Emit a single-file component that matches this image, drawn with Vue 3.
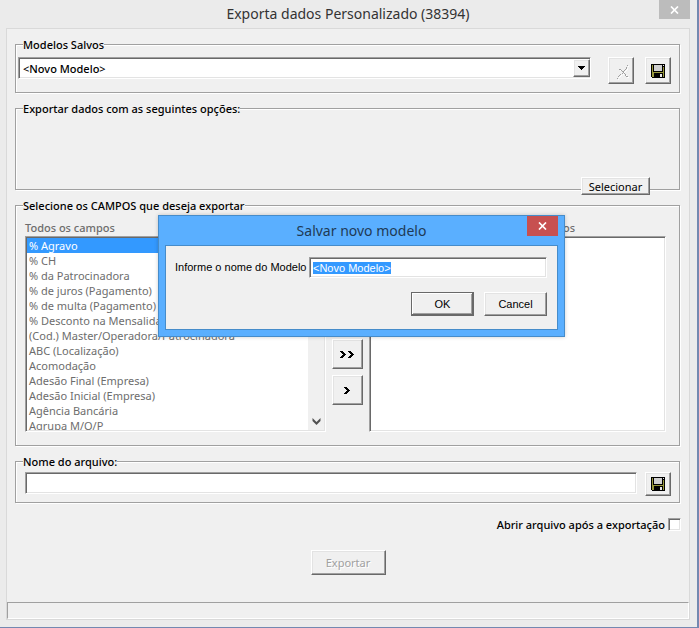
<template>
  <main class="window">
    <header class="title-bar">
      <h1 class="window-title">Exporta dados Personalizado (38394)</h1>
      <button class="close-button" type="button" aria-label="Fechar">
        <svg width="9" height="8" viewBox="0 0 9 8">
          <path d="M1 0.5 L8 7.5 M8 0.5 L1 7.5" stroke="#fff" stroke-width="1.7" />
        </svg>
      </button>
    </header>

    <div class="client">
      <fieldset class="group">
        <legend>Modelos Salvos</legend>
        <div class="row models-row">
          <div class="combo sunken">
            <select v-model="model" aria-label="Modelos Salvos">
              <option>&lt;Novo Modelo&gt;</option>
            </select>
            <span class="combo-arrow raised">
              <svg width="7" height="4" viewBox="0 0 7 4" shape-rendering="crispEdges">
                <path d="M0 0h7v1h-1v1h-1v1h-1v1h-1v-1h-1v-1h-1v-1h-1z" fill="#000" />
              </svg>
            </span>
          </div>
          <button class="icon-button delete-button raised" type="button" aria-label="Excluir modelo" disabled>
            <svg width="12" height="15" viewBox="0 0 12 15" shape-rendering="crispEdges">
              <path :d="crossPath" fill="#fff" transform="translate(1 1)" />
              <path :d="crossPath" fill="#a0a0a0" />
            </svg>
          </button>
          <button class="icon-button raised" type="button" aria-label="Salvar modelo">
            <svg width="14" height="14" viewBox="0 0 14 14" shape-rendering="crispEdges">
              <path v-for="part in diskParts" :key="part.d" :d="part.d" :fill="part.fill" />
            </svg>
          </button>
        </div>
      </fieldset>

      <fieldset class="group">
        <legend>Exportar dados com as seguintes opções:</legend>
        <div class="row options-row">
          <button class="select-button raised" type="button">Selecionar</button>
        </div>
      </fieldset>

      <fieldset class="group">
        <legend>Selecione os CAMPOS que deseja exportar</legend>
        <div class="row fields-row">
          <div class="column all-fields">
            <label for="all-fields">Todos os campos</label>
            <div class="list-box sunken">
              <select id="all-fields" v-model="selectedField" size="13" disabled>
                <option v-for="field in fields" :key="field" :value="field">{{ field }}</option>
              </select>
              <span class="scrollbar">
                <svg width="9" height="7" viewBox="0 0 9 7">
                  <path d="M0.5 0 L4.5 4 L8.5 0 V3 L4.5 7 L0.5 3 Z" fill="#505050" />
                </svg>
              </span>
            </div>
          </div>
          <div class="move-buttons">
            <button class="raised" type="button" aria-label="Adicionar todos">
              <svg width="15" height="7" viewBox="0 0 15 7" shape-rendering="crispEdges">
                <path :d="chevronPath" />
                <path :d="chevronPath" transform="translate(8 0)" />
              </svg>
            </button>
            <button class="raised" type="button" aria-label="Adicionar">
              <svg width="7" height="7" viewBox="0 0 7 7" shape-rendering="crispEdges">
                <path :d="chevronPath" />
              </svg>
            </button>
          </div>
          <div class="column chosen-fields">
            <label for="chosen-fields">Campos selecionados</label>
            <div class="list-box sunken">
              <select id="chosen-fields" size="13" disabled></select>
            </div>
          </div>
        </div>
      </fieldset>

      <fieldset class="group">
        <legend>Nome do arquivo:</legend>
        <div class="row file-row">
          <input v-model="fileName" class="text-box sunken" type="text" aria-label="Nome do arquivo" />
          <button class="icon-button raised" type="button" aria-label="Escolher arquivo">
            <svg width="14" height="14" viewBox="0 0 14 14" shape-rendering="crispEdges">
              <path v-for="part in diskParts" :key="part.d" :d="part.d" :fill="part.fill" />
            </svg>
          </button>
        </div>
      </fieldset>

      <div class="open-after">
        <label for="open-after">Abrir arquivo após a exportação</label>
        <input id="open-after" v-model="openAfter" class="sunken" type="checkbox" />
      </div>

      <button class="export-button raised" type="button" disabled>Exportar</button>

      <footer class="status-bar"></footer>
    </div>

    <section class="dialog" role="dialog" aria-labelledby="dialog-title">
      <header class="dialog-header">
        <h2 id="dialog-title">Salvar novo modelo</h2>
        <button class="close-button" type="button" aria-label="Fechar">
          <svg width="9" height="8" viewBox="0 0 9 8">
            <path d="M1 0.5 L8 7.5 M8 0.5 L1 7.5" stroke="#fff" stroke-width="1.7" />
          </svg>
        </button>
      </header>
      <form class="dialog-body" @submit.prevent>
        <div class="dialog-field">
          <label for="model-name">Informe o nome do Modelo</label>
          <input id="model-name" ref="nameInput" v-model="modelName" class="text-box sunken" type="text" />
        </div>
        <div class="dialog-actions">
          <button class="raised default" type="submit">OK</button>
          <button class="raised" type="button">Cancel</button>
        </div>
      </form>
    </section>
  </main>
</template>

<script setup>
import { ref, onMounted } from 'vue'

const fields = [
  '% Agravo',
  '% CH',
  '% da Patrocinadora',
  '% de juros (Pagamento)',
  '% de multa (Pagamento)',
  '% Desconto na Mensalidade',
  '(Cod.) Master/Operadora/Patrocinadora',
  'ABC (Localização)',
  'Acomodação',
  'Adesão Final (Empresa)',
  'Adesão Inicial (Empresa)',
  'Agência Bancária',
  'Agrupa M/O/P'
]

const model = ref('<Novo Modelo>')
const modelName = ref('<Novo Modelo>')
const selectedField = ref('% Agravo')
const fileName = ref('')
const openAfter = ref(false)
const nameInput = ref(null)

// Pixel icons
const chevronPath = 'M0 0h3v1h1v1h1v1h1v1h-1v1h-1v1h-1v1h-3v-1h1v-1h1v-1h1v-1h-1v-1h-1v-1h-1z'
const crossPath =
  'M10 0h1v1h-1zM9 2h1v2h-1zM8 4h1v1h-1zM7 5h1v1h-1zM6 6h1v2h-1zM5 8h1v1h-1zM3 9h1v1h-1zM2 10h1v1h-1zM1 11h1v1h-1zM0 13h1v1h-1zM2 4h2v1h-2zM4 5h1v1h-1zM5 6h1v1h-1zM7 8h1v1h-1zM8 9h1v2h-1zM9 11h2v1h-2z'
const diskParts = [
  { d: 'M0 0h14v14h-13v-1h-1z', fill: '#000' },
  { d: 'M1 1h1v12h-1zM12 3h1v10h-1zM2 8h10v1h-10zM2 9h1v4h-1z', fill: '#98983c' },
  { d: 'M3 1h8v6h-8z', fill: '#d0d0d0' },
  { d: 'M12 1h1v1h-1zM9 10h2v3h-2z', fill: '#e8e8e8' }
]

onMounted(() => {
  nameInput.value.focus()
  nameInput.value.select()
})
</script>

<style>
body {
  background: #ebebeb;
}
</style>

<style scoped>
.window {
  position: relative;
  display: flex;
  flex-direction: column;
  min-height: 100vh;
  padding: 0 7px 7px 6px;
  box-sizing: border-box;
  background: #ebebeb;
  border-right: 2px solid #7488b0;
  border-bottom: 1px solid #7488b0;
  color: #000;
  font-family: "Noto Sans", "Open Sans", sans-serif;
  font-size: 11px;
  font-weight: 500;
  line-height: 15px;
}

button,
input,
select {
  margin: 0;
  padding: 0;
  box-sizing: border-box;
  border-radius: 0;
  outline: none;
  color: inherit;
  font: inherit;
}

button {
  font-weight: 400;
}

svg {
  display: block;
}

.raised {
  display: flex;
  align-items: center;
  justify-content: center;
  border: 1px solid;
  border-color: #fff #696969 #696969 #fff;
  background: #f0f0f0;
  box-shadow: inset -1px -1px 0 #a0a0a0, inset 1px 1px 0 #e3e3e3;
}

.sunken {
  border: 1px solid;
  border-color: #a0a0a0 #fff #fff #a0a0a0;
  background: #fff;
  box-shadow: inset 1px 1px 0 #696969, inset -1px -1px 0 #e3e3e3;
}

.title-bar {
  display: flex;
  align-items: flex-start;
  height: 28px;
}

.window-title {
  flex: 1;
  margin: 0;
  padding-left: 31px;
  color: #333;
  font-size: 14px;
  font-weight: 400;
  line-height: 28px;
  text-align: center;
}

.close-button {
  display: flex;
  align-items: center;
  justify-content: center;
  width: 31px;
  height: 19px;
  border: 0;
  background: #bcbcbc;
}

.client {
  display: flex;
  flex: 1;
  flex-direction: column;
  gap: 8px;
  padding-top: 8px;
  background: #f0f0f0;
  border: 1px solid #d9d9d9;
}

.group {
  min-width: 0;
  margin: 0 9px 0 8px;
  padding: 0;
  border: 1px solid #a0a0a0;
  box-shadow: 1px 1px 0 #fff, inset 1px 1px 0 #fff;
}

.group legend {
  height: 14px;
  margin-left: 7px;
  padding: 0;
  background: #f0f0f0;
  line-height: 16px;
}

.row {
  display: flex;
}

.models-row {
  align-items: flex-start;
  gap: 11px;
  padding: 6px 8px 8px 2px;
}

.combo {
  display: flex;
  flex: 1;
  height: 22px;
  padding: 1px 0 1px 1px;
  box-sizing: border-box;
}

.combo select {
  flex: 1;
  padding-left: 3px;
  border: 0;
  background: transparent;
  appearance: none;
}

.combo-arrow {
  width: 17px;
  box-sizing: border-box;
}

.icon-button {
  width: 26px;
  height: 27px;
}

.delete-button {
  margin-left: 6px;
  padding: 3px 0 0 4px;
}

.options-row {
  justify-content: flex-end;
  padding: 62px 29px 0;
}

.select-button {
  width: 69px;
  height: 18px;
  margin-bottom: -6px;
}

.fields-row {
  gap: 6px;
  padding: 8px 13px 13px 9px;
}

.column {
  display: flex;
  flex-direction: column;
  gap: 1px;
  color: #6d6d6d;
}

.all-fields {
  flex: 301;
  min-width: 0;
}

.chosen-fields {
  flex: 297;
  min-width: 0;
}

.chosen-fields label {
  padding-right: 91px;
  text-align: right;
}

.list-box {
  display: flex;
  height: 196px;
  padding: 1px;
  box-sizing: border-box;
}

.list-box select {
  flex: 1;
  width: 100%;
  min-width: 0;
  border: 0;
  background: transparent;
  color: #6d6d6d;
  opacity: 1;
  overflow: hidden;
  appearance: none;
}

.list-box option {
  min-height: 15px;
  height: 15px;
  padding: 0 2px;
  box-sizing: border-box;
  color: #6d6d6d;
  line-height: 15px;
}

.list-box option:checked {
  background: #39f linear-gradient(#39f, #39f);
  color: #fff;
  -webkit-text-fill-color: #fff;
}

.scrollbar {
  display: flex;
  align-items: flex-end;
  justify-content: center;
  width: 16px;
  padding-bottom: 5px;
  box-sizing: border-box;
  background: #f0f0f0;
}

.move-buttons {
  display: flex;
  flex-direction: column;
  justify-content: flex-end;
  gap: 6px;
  padding-bottom: 27px;
}

.move-buttons button {
  width: 31px;
  height: 30px;
}

.file-row {
  gap: 8px;
  padding: 4px 8px 6px 9px;
}

.file-row .icon-button {
  height: 24px;
}

.text-box {
  flex: 1;
  min-width: 0;
  height: 22px;
  padding: 0 3px;
}

.open-after {
  display: flex;
  align-items: center;
  justify-content: flex-end;
  gap: 3px;
  margin: 6px 8px 0;
}

.open-after input {
  width: 13px;
  height: 13px;
  appearance: none;
}

.export-button {
  align-self: center;
  width: 75px;
  height: 25px;
  margin-top: 10px;
  color: #a0a0a0;
  text-shadow: 1px 1px 0 #fff;
}

.status-bar {
  height: 17px;
  margin-top: auto;
  box-sizing: border-box;
  border: 1px solid;
  border-color: #a0a0a0 #fff #fff #a0a0a0;
}

.dialog {
  position: absolute;
  top: 215px;
  left: 158px;
  width: 407px;
  padding: 0 6px 6px;
  box-sizing: border-box;
  border: 1px solid #468cca;
  background: #5aafff;
  box-shadow: 0 0 4px rgba(0, 0, 0, 0.2);
}

.dialog-header {
  display: flex;
  align-items: flex-start;
  height: 29px;
}

.dialog-header h2 {
  flex: 1;
  margin: 0;
  padding-left: 31px;
  color: #1f3a55;
  font-size: 14px;
  font-weight: 400;
  line-height: 29px;
  text-align: center;
}

.dialog-header .close-button {
  height: 20px;
  background: #c75050;
}

.dialog-body {
  padding: 11px 10px 13px 9px;
  border: 1px solid #468cca;
  background: #f0f0f0;
  font-family: "Liberation Sans", "Open Sans", sans-serif;
  font-weight: 400;
}

.dialog-field {
  display: flex;
  align-items: center;
  justify-content: space-between;
}

.dialog-field .text-box {
  flex: 0 0 238px;
  height: 21px;
}

.dialog-field .text-box::selection {
  background: #39f;
  color: #fff;
}

.dialog-actions {
  display: flex;
  justify-content: flex-end;
  gap: 10px;
  margin-top: 14px;
}

.dialog-actions button {
  width: 63px;
  height: 24px;
}

.dialog-actions .default {
  border-color: #696969;
  box-shadow: inset -1px -1px 0 #696969, inset 1px 1px 0 #fff, inset -2px -2px 0 #a0a0a0;
}
</style>
